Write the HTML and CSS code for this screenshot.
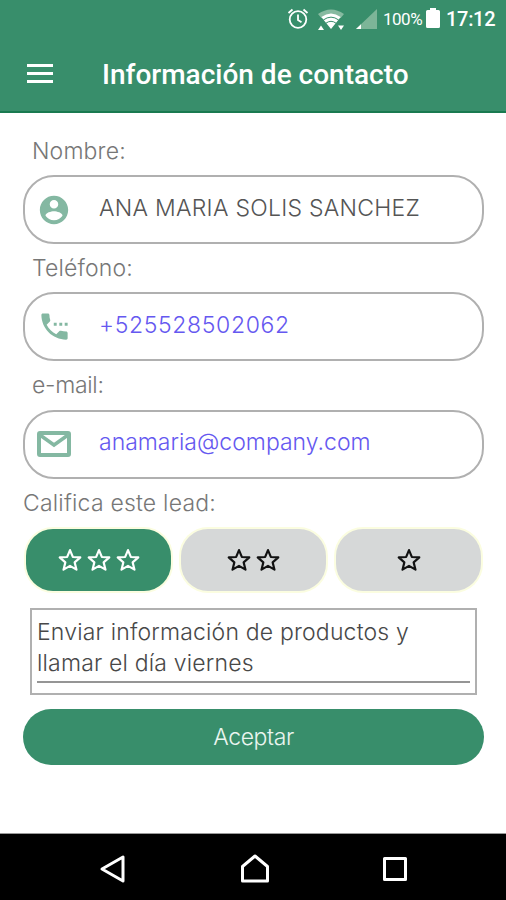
FILE: index.html
```html
<!DOCTYPE html>
<html lang="es">
<head>
<meta charset="utf-8">
<title>Información de contacto</title>
<link rel="stylesheet" href="styles.css">
</head>
<body>
<svg class="defs" aria-hidden="true">
  <symbol id="star" viewBox="0 0 24 24"><path d="M12 2.8l2.600 6.400 6.900.4-5.200 4.600 1.700 6.700-6-3.500-6 3.500 1.700-6.700-5.200-4.600 6.900-.4z" fill="none" stroke="currentColor" stroke-width="2" stroke-linejoin="round"/></symbol>
</svg>
<header class="header">
  <div class="status">
    <svg class="alarm" width="22" height="22" viewBox="0 0 22 22" fill="none" stroke="#fff" stroke-width="1.8"><circle cx="11" cy="11.500" r="8.300"/><path d="M11 6.500v5.500l3.500 2.300M1.500 5l4-3.500M20.500 5l-4-3.500"/></svg>
    <svg class="wifi" width="28" height="24" viewBox="0 0 28 24"><path d="M1 6Q14-3 27 6L23.700 10Q14 3 4.300 10z" fill="#86baa0"/><path d="M4.300 9Q14 2 23.700 9L14 21z" fill="#fff"/><path d="M6.300 12Q14 6.300 21.700 12M8.800 15.300Q14 11.300 19.200 15.300" fill="none" stroke="#388e6b" stroke-width="1"/><path d="M1 22l3-4.500L7 22zM21 17.500h6L24 22z" fill="#fff"/></svg>
    <svg class="signal" width="21" height="20" viewBox="0 0 21 20"><path d="M0 20L21 0v20z" fill="#7db598"/><path d="M0 20l5-4.800V20z" fill="#fff"/></svg>
    <span class="percent">100%</span>
    <svg class="battery" width="14" height="20" viewBox="0 0 14 20"><path d="M4 0h6v2h2.500q1.500 0 1.500 1.500v15q0 1.500-1.500 1.500h-11Q0 20 0 18.500v-15Q0 2 1.500 2H4z" fill="#fff"/></svg>
    <span class="clock">17:12</span>
  </div>
  <div class="titlebar">
    <div class="menu"><i></i><i></i><i></i></div>
    <h1 class="title">Información de contacto</h1>
  </div>
</header>
<main class="form">
  <div class="label">Nombre:</div>
  <div class="field">
    <span class="icon"><svg width="34" height="34" viewBox="0 0 24 24" fill="currentColor"><path d="M12 2C6.480 2 2 6.480 2 12s4.480 10 10 10 10-4.480 10-10S17.520 2 12 2zm0 3c1.660 0 3 1.340 3 3s-1.340 3-3 3-3-1.340-3-3 1.340-3 3-3zm0 14.200c-2.500 0-4.710-1.280-6-3.220.030-1.990 4-3.080 6-3.080 1.990 0 5.970 1.090 6 3.080-1.290 1.940-3.500 3.220-6 3.220z"/></svg></span>
    <span class="value name">ANA MARIA SOLIS SANCHEZ</span>
  </div>
  <div class="label">Teléfono:</div>
  <div class="field">
    <span class="icon"><svg width="35" height="35" viewBox="0 0 24 24" fill="currentColor"><path d="M20 15.500c-1.250 0-2.450-.2-3.570-.57-.35-.11-.74-.03-1.020.24l-2.200 2.200c-2.830-1.440-5.150-3.750-6.590-6.590l2.200-2.210c.28-.26.36-.65.25-1C8.700 6.450 8.500 5.250 8.500 4c0-.55-.45-1-1-1H4c-.55 0-1 .45-1 1 0 9.390 7.610 17 17 17 .55 0 1-.45 1-1v-3.500c0-.55-.45-1-1-1zM11.500 9.500h2v2h-2zM15.300 9.500h2v2h-2zM19 9.500h2v2h-2z"/></svg></span>
    <span class="value link phone">+525528502062</span>
  </div>
  <div class="label email-label">e-mail:</div>
  <div class="field">
    <span class="icon"><svg width="34" height="26" viewBox="0 0 34 26" fill="none" stroke="currentColor"><rect x="2" y="2" width="30" height="22" rx="1" stroke-width="4"/><path d="M3 4l14 10L31 4" stroke-width="3.500"/></svg></span>
    <span class="value link">anamaria@company.com</span>
  </div>
  <div class="label rate">Califica este lead:</div>
  <div class="ratings">
    <button class="rating selected"><svg class="star"><use href="#star"/></svg><svg class="star"><use href="#star"/></svg><svg class="star"><use href="#star"/></svg></button>
    <button class="rating"><svg class="star"><use href="#star"/></svg><svg class="star"><use href="#star"/></svg></button>
    <button class="rating"><svg class="star"><use href="#star"/></svg></button>
  </div>
  <div class="notes"><p class="text">Enviar información de productos y<br>llamar el día viernes</p></div>
  <button class="accept">Aceptar</button>
</main>
<nav class="nav">
  <svg width="28" height="30" viewBox="0 0 28 30"><path d="M3 15L24 3v24z"/></svg>
  <svg width="30" height="30" viewBox="0 0 30 30"><path d="M2.500 12.500L15 2l12.500 10.500V27h-25z"/></svg>
  <svg width="26" height="26" viewBox="0 0 26 26"><path d="M2.500 2.500h21v21h-21z"/></svg>
</nav>
</body>
</html>
```
FILE: styles.css
```css
* { box-sizing: border-box; }
body {
  margin: 0;
  width: 506px;
  height: 900px;
  display: flex;
  flex-direction: column;
  background: #fff;
  overflow: hidden;
  font-family: Inter, "Open Sans", sans-serif;
  font-weight: 300;
  font-size: 23px;
}
.defs { display: none; }
svg { display: block; flex: none; }
.header {
  height: 113px;
  background: #388e6b;
  border-bottom: 2px solid #197a50;
  color: #fff;
  font-family: Roboto, sans-serif;
}
.status {
  height: 37px;
  display: flex;
  align-items: center;
  justify-content: flex-end;
  padding-right: 10px;
  font-weight: 500;
}
.alarm { margin-right: 8px; }
.wifi { margin-right: 11px; margin-top: 3px; }
.signal { margin-right: 6px; }
.percent { width: 38px; font-size: 17px; letter-spacing: -.5px; font-weight: 400; margin-right: 5px; }
.battery { margin-right: 6px; margin-top: -2px; }
.clock { width: 50px; font-size: 20px; letter-spacing: -.3px; white-space: nowrap; }
.titlebar { display: flex; align-items: center; height: 76px; padding-left: 27px; }
.menu { width: 26px; display: grid; gap: 5px; margin: -4px 49px 0 0; }
.menu i { height: 3px; background: #fff; }
.title { margin: 0; font-size: 28px; line-height: 32px; font-weight: 500; }
.form { flex: 1; padding: 18px 22px 0 23px; display: flex; flex-direction: column; }
.label { flex: none; height: 48.400px; padding: 10px 9px 0; line-height: 28px; letter-spacing: .15px; color: #777; }
.label:first-child { height: 44px; padding-top: 6px; }
.email-label { letter-spacing: -.3px; }
.field {
  flex: none;
  height: 69px;
  border: 2px solid #b0b0b0;
  border-radius: 31px;
  display: flex;
  align-items: center;
}
.icon { width: 58px; display: grid; place-items: center; color: #84b8a2; }
.value { margin: -4px 0 0 16px; color: #555; white-space: nowrap; }
.name { letter-spacing: .27px; }
.link { color: #6558f0; }
.phone { letter-spacing: .65px; }
.rate { padding-left: 0; letter-spacing: .2px; }
.ratings { display: flex; gap: 10px; height: 62px; margin: 2px 3px 17px; flex: none; }
.rating {
  flex: 1;
  border: 0;
  padding: 0;
  border-radius: 27px;
  background: #d6d8d8;
  color: #111;
  box-shadow: 0 0 0 2px #fbfde0;
  display: flex;
  align-items: center;
  justify-content: center;
  gap: 3px;
}
.selected { background: #388e6b; color: #fff; }
.star { width: 26px; height: 26px; }
.notes { width: 447px; height: 87px; margin-left: 7px; border: 2px solid #b0b0b0; padding: 7px 5px; flex: none; }
.text { margin: 0; height: 66px; border-bottom: 2px solid #959595; color: #484848; line-height: 31px; letter-spacing: .18px; white-space: nowrap; }
.accept {
  flex: none;
  height: 56px;
  margin-top: 14px;
  border: 0;
  border-radius: 28px;
  background: #388e6b;
  color: #eaf5ef;
  font: inherit;
  letter-spacing: -.4px;
}
.nav {
  height: 67px;
  background: #000;
  border-top: 1px solid #999;
  display: flex;
  align-items: center;
  justify-content: space-between;
  padding: 4px 98px 0 99px;
}
.nav path { fill: none; stroke: #fff; stroke-width: 3; stroke-linejoin: round; }
```
